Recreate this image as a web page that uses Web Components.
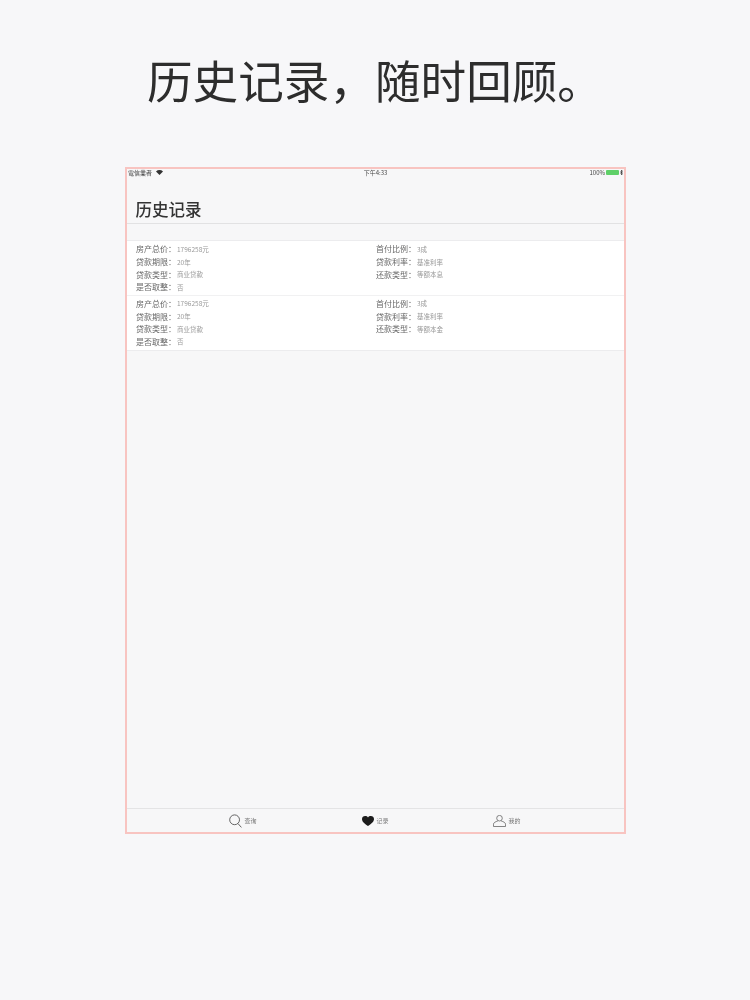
<!DOCTYPE html>
<html lang="zh">
<head>
<meta charset="utf-8">
<title>历史记录</title>
<style>
  html, body { margin: 0; height: 100%; }
  body {
    background: #f7f7f9;
    font-family: "Liberation Sans", "Noto Sans CJK SC", sans-serif;
  }
</style>
</head>
<body>
<promo-page heading="历史记录，随时回顾。">
  <status-bar></status-bar>
  <nav-title>历史记录</nav-title>
  <record-list>
    <record-row total="1796258元" repay="等额本息"></record-row>
    <record-row total="1796258元" repay="等额本金"></record-row>
  </record-list>
  <tab-bar slot="tabs"></tab-bar>
</promo-page>

<script>
class PromoPage extends HTMLElement {
  connectedCallback() {
    this.attachShadow({mode: 'open'});
    this.shadowRoot.innerHTML = `
      <style>
        :host { display: block; width: 750px; height: 1000px; padding-top: 50px; box-sizing: border-box; }
        h1 {
          margin: 0; height: 58px; line-height: 58px; text-align: center;
          font-size: 45.6px; font-weight: 400; color: #2d2d2d;
          font-family: "Noto Sans CJK SC", sans-serif;
          filter: blur(.3px);
        }
        .device {
          width: 501px; height: 667px; margin: 59px 0 0 125px; box-sizing: border-box;
          border: 2px solid #f8c4c1; background: #f7f7f8;
          display: flex; flex-direction: column;
        }
        .body { flex: 1; display: flex; flex-direction: column; margin-top: -1px; }
      </style>
      <h1>${this.getAttribute('heading')}</h1>
      <div class="device">
        <div class="body"><slot></slot></div>
        <slot name="tabs"></slot>
      </div>
    `;
  }
}

class StatusBar extends HTMLElement {
  connectedCallback() {
    this.attachShadow({mode: 'open'});
    this.shadowRoot.innerHTML = `
      <style>
        :host {
          display: grid; grid-template-columns: 1fr auto 1fr; align-items: center;
          height: 9px; padding: 0 1px;
          font: 6px/7px "Noto Sans CJK SC", sans-serif; color: #444;
          filter: blur(.3px);
        }
        .left { display: flex; align-items: center; gap: 4px; }
        .right { display: flex; align-items: center; justify-content: flex-end; gap: 1px; }
        .battery { width: 13px; height: 5px; background: #5fd068; border-radius: 1px; }
        svg { display: block; }
      </style>
      <div class="left">
        <span>電信業者</span>
        <svg width="7" height="5" viewBox="0 0 14 10"><path d="M7 10 0 3a10 10 0 0 1 14 0z" fill="#333"/></svg>
      </div>
      <span>下午4:33</span>
      <div class="right">
        <span>100%</span>
        <span class="battery"></span>
        <svg width="3" height="5" viewBox="0 0 6 10"><path d="M3 0v10M0 3l6 4-3 3V0l3 3-6 4" stroke="#333" fill="none"/></svg>
      </div>
    `;
  }
}

class NavTitle extends HTMLElement {
  connectedCallback() {
    this.attachShadow({mode: 'open'});
    this.shadowRoot.innerHTML = `
      <style>
        :host {
          display: block; height: 47px; box-sizing: border-box; padding: 22px 0 0 8.5px;
          border-bottom: 1px solid #e2e2e3;
          font: 500 16.5px/20px "Noto Sans CJK SC", sans-serif; color: #333;
        }
        span { display: block; filter: blur(.3px); }
      </style>
      <span><slot></slot></span>
    `;
  }
}

class RecordList extends HTMLElement {
  connectedCallback() {
    this.attachShadow({mode: 'open'});
    this.shadowRoot.innerHTML = `
      <style>
        :host { display: block; margin-top: 16px; background: #fff; border-top: 1px solid #ececee; border-bottom: 1px solid #ececee; }
      </style>
      <slot></slot>
    `;
  }
}

class RecordRow extends HTMLElement {
  connectedCallback() {
    this.attachShadow({mode: 'open'});
    const left = [
      ['房产总价', this.getAttribute('total')],
      ['贷款期限', '20年'],
      ['贷款类型', '商业贷款'],
      ['是否取整', '否']
    ];
    const right = [
      ['首付比例', '3成'],
      ['贷款利率', '基准利率'],
      ['还款类型', this.getAttribute('repay')]
    ];
    const cell = ([label, value]) => `<div class="line"><span class="label">${label}：</span><span class="value">${value}</span></div>`;
    this.shadowRoot.innerHTML = `
      <style>
        :host {
          display: grid; grid-template-columns: 240px 1fr; height: 54.5px; box-sizing: border-box;
          padding: 1.5px 0 0 9px; border-bottom: 1px solid #f1f1f2;
          font-family: "Noto Sans CJK SC", sans-serif;
        }
        :host(:last-child) { border-bottom: 0; }
        .col { filter: blur(.3px); }
        .line { display: flex; align-items: center; height: 12.7px; }
        .label { width: 41px; font-size: 8px; color: #666; white-space: nowrap; }
        .value { font-size: 6.5px; color: #999; }
      </style>
      <div class="col">${left.map(cell).join('')}</div>
      <div class="col">${right.map(cell).join('')}</div>
    `;
  }
}

class TabBar extends HTMLElement {
  connectedCallback() {
    this.attachShadow({mode: 'open'});
    this.shadowRoot.innerHTML = `
      <style>
        :host {
          display: grid; grid-template-columns: 133px 131px 100px; padding: 1px 0 0 102px;
          height: 22px; border-top: 1px solid #e4e4e5;
          align-items: center;
          font: 6px/1 "Noto Sans CJK SC", sans-serif; color: #777;
        }
        .tab { display: flex; align-items: center; gap: 2.5px; filter: blur(.25px); }
        svg { display: block; }
      </style>
      <div class="tab">
        <svg width="13" height="14" viewBox="0 0 13 14" fill="none" stroke="#555" stroke-width="0.9"><circle cx="5.6" cy="5.8" r="4.9"/><path d="M9 9.6l3.4 3.8"/></svg>
        <span>查询</span>
      </div>
      <div class="tab">
        <svg width="12" height="10" viewBox="0 0 24 20"><path d="M12 20C3 14 0 10.5 0 6 0 2.5 2.8 0 6.3 0 8.7 0 10.8 1 12 2.8 13.2 1 15.3 0 17.7 0 21.2 0 24 2.5 24 6c0 4.5-3 8-12 14z" fill="#1c1c1c"/></svg>
        <span>记录</span>
      </div>
      <div class="tab">
        <svg width="13" height="12" viewBox="0 0 13 12" fill="none" stroke="#666" stroke-width="0.8"><circle cx="6.5" cy="3.2" r="2.8"/><path d="M4.8 6C2.5 6.7.5 7.600.5 9.2v2.3h12V9.2c0-1.6-2-2.500-4.300-3.200"/></svg>
        <span>我的</span>
      </div>
    `;
  }
}

customElements.define('promo-page', PromoPage);
customElements.define('status-bar', StatusBar);
customElements.define('nav-title', NavTitle);
customElements.define('record-list', RecordList);
customElements.define('record-row', RecordRow);
customElements.define('tab-bar', TabBar);
</script>
</body>
</html>
